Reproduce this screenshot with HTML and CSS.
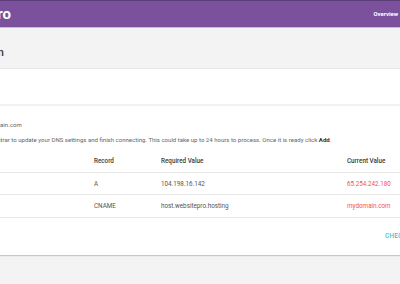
FILE: index.html
```html
<!DOCTYPE html>
<html lang="en">
<head>
<meta charset="utf-8">
<title>Connect Domain</title>
<link rel="stylesheet" href="styles.css">
</head>
<body>
<header class="topbar">
  <div class="brand"><span>WebsitePro</span></div>
  <nav class="nav"><a href="#">Overview</a></nav>
</header>
<section class="titlebar">
  <div class="title"><h1>Connect Domain</h1></div>
</section>
<div class="card card-top"></div>
<div class="card card-main">
  <p class="info info-domain">Domain: mydomain.com</p>
  <p class="info info-help">Please contact your domain registrar to update your DNS settings and finish connecting. This could take up to 24 hours to process. Once it is ready click <b>Add</b>.</p>
  <div class="table">
    <div class="row head"><span></span><span>Record</span><span>Required Value</span><span>Current Value</span></div>
    <div class="row"><span>@</span><span>A</span><span>104.198.16.142</span><span class="bad">65.254.242.180</span></div>
    <div class="row"><span>www</span><span>CNAME</span><span>host.websitepro.hosting</span><span class="bad">mydomain.com</span></div>
  </div>
  <div class="actions"><a href="#" class="check">CHECK CONNECTION</a></div>
</div>
</body>
</html>
```
FILE: styles.css
```css
html, body {
  margin: 0;
  overflow: hidden;
}
body {
  width: 400px;
  height: 284px;
  background: #f3f3f3;
  font-family: Roboto, "Liberation Sans", sans-serif;
}
.topbar {
  display: flex;
  justify-content: space-between;
  align-items: center;
  height: 26px;
  background: #7b519d;
  border-top: 1px solid #5d3f78;
  border-bottom: 1px solid #cbb9db;
}
.brand {
  display: flex;
  justify-content: flex-end;
  width: 11px;
}
.brand span {
  white-space: nowrap;
  color: #fff;
  font-weight: 700;
  font-size: 15px;
}
.nav {
  display: flex;
  gap: 12px;
  padding-right: 2px;
}
.nav a {
  color: #fff;
  font-size: 5.9px;
  font-weight: 700;
  text-decoration: none;
}
.titlebar {
  box-sizing: border-box;
  height: 41px;
  padding-top: 18px;
  border-bottom: 1px solid #e8e8e8;
}
.title {
  display: flex;
  justify-content: flex-end;
  width: 4px;
}
.title h1 {
  margin: 0;
  font-size: 11px;
  line-height: 13px;
  font-weight: 500;
  color: #333;
  white-space: nowrap;
}
.card {
  background: #fff;
}
.card-top {
  height: 35px;
  border-bottom: 2px solid #f1f1f1;
}
.card-main {
  padding-top: 14px;
  box-shadow: 0 1px 1px rgba(0, 0, 0, 0.18);
}
.info {
  margin: 0;
  font-size: 6.05px;
  line-height: 9px;
  color: #666;
  white-space: nowrap;
}
.info-domain {
  margin-left: -44px;
}
.info-help {
  margin-top: 6px;
  margin-left: -89px;
}
.info b {
  color: #333;
  font-weight: 700;
}
.table {
  margin-top: 6px;
}
.row {
  display: grid;
  grid-template-columns: 94px 67px 186px 1fr;
  align-items: center;
  height: 21px;
  border-bottom: 1px solid #e6e6e6;
  font-size: 6.3px;
  color: #555;
  white-space: nowrap;
}
.row.head {
  height: 22px;
  font-weight: 500;
  color: #3a3a3a;
}
.row:last-child {
  height: 22px;
}
.row > span:first-child {
  visibility: hidden;
}
.bad {
  color: #f0544c;
}
.actions {
  padding: 10px 0 14px 385px;
  line-height: 9px;
  white-space: nowrap;
}
.check {
  color: #3cbfd5;
  font-size: 6.3px;
  font-weight: 500;
  letter-spacing: 0.3px;
  text-decoration: none;
}
```
